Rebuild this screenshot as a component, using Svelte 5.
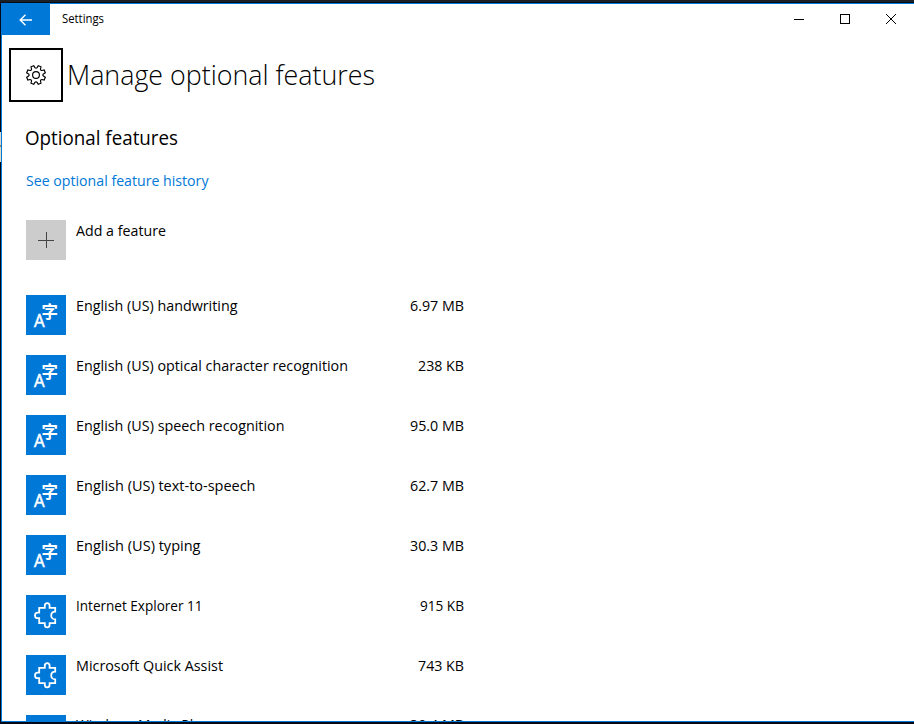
<script>
  const features = [
    { name: 'English (US) handwriting', size: '6.97 MB', kind: 'lang', w: 161.5, sw: 54 },
    { name: 'English (US) optical character recognition', size: '238 KB', kind: 'lang', w: 272, sw: 46 },
    { name: 'English (US) speech recognition', size: '95.0 MB', kind: 'lang', w: 208.5, sw: 54 },
    { name: 'English (US) text-to-speech', size: '62.7 MB', kind: 'lang', w: 179.5, sw: 54 },
    { name: 'English (US) typing', size: '30.3 MB', kind: 'lang', w: 124.5, sw: 54 },
    { name: 'Internet Explorer 11', size: '915 KB', kind: 'puzzle', w: 126.5, sw: 44 },
    { name: 'Microsoft Quick Assist', size: '743 KB', kind: 'puzzle', w: 147, sw: 46 },
    { name: 'Windows Media Player', size: '39.4 MB', kind: 'puzzle', w: 145, sw: 54, y: 15 }
  ];

  // Eight-toothed gear outline centred on the origin
  const pt = (r, deg) => {
    const a = (deg * Math.PI) / 180;
    return `${(r * Math.cos(a)).toFixed(2)} ${(r * Math.sin(a)).toFixed(2)}`;
  };
  let gear = '';
  for (let i = 0; i < 8; i++) {
    const c = i * 45 + 22.5;
    gear += `${i ? 'L' : 'M'}${pt(9.6, c - 9)} L${pt(9.6, c + 9)} L${pt(7.5, c + 14)} Q${pt(6.3, c + 22.5)} ${pt(7.5, c + 31)} `;
  }
  gear += 'Z';
</script>

{#snippet label(text, width, size, y = 17)}
  <svg class="label" width={width} height="24" role="img" aria-label={text}>
    <text x="0" y={y} font-size={size} textLength={width} lengthAdjust="spacingAndGlyphs">{text}</text>
  </svg>
{/snippet}

<div class="desktop">
  <div class="window">
    <header class="titlebar">
      <button class="back" aria-label="Back">
        <svg width="14" height="12" viewBox="0 0 14 12"><path d="M13 6H1.5M6.5 .8L1.2 6l5.3 5.2" /></svg>
      </button>
      <div class="title">{@render label('Settings', 42, 12)}</div>
      <div class="controls">
        <svg width="46" height="31" shape-rendering="crispEdges"><path d="M18 16.5h10" /></svg>
        <svg width="46" height="31" shape-rendering="crispEdges"><rect x="18.5" y="11.5" width="9" height="9" /></svg>
        <svg width="46" height="31"><path d="M18 11l10 10M28 11l-10 10" /></svg>
      </div>
    </header>

    <div class="heading">
      <button class="home" aria-label="Home">
        <svg width="22" height="22" viewBox="-11 -11 22 22"><path d={gear} /><circle r="3.4" /></svg>
      </button>
      <h1>
        <svg class="label" width="308" height="40"><text x="0" y="29" font-size="28" textLength="308" lengthAdjust="spacingAndGlyphs">Manage optional features</text></svg>
      </h1>
    </div>

    <main>
      <h2>{@render label('Optional features', 153, 20)}</h2>
      <a href="#history">{@render label('See optional feature history', 182.5, 15)}</a>

      <div class="row add">
        <div class="tile grey">
          <svg width="40" height="40" shape-rendering="crispEdges"><path d="M12 20h16M20 12v16" /></svg>
        </div>
        <div class="name">{@render label('Add a feature', 90, 15, 16)}</div>
      </div>

      <div class="list">
        {#each features as f}
          <div class="row">
            <div class="tile">
              {#if f.kind === 'lang'}
                <svg width="40" height="40">
                  <text x="15.4" y="23" class="han">字</text>
                  <text x="8" y="32" class="latin" textLength="10.6" lengthAdjust="spacingAndGlyphs">A</text>
                </svg>
              {:else}
                <svg width="40" height="40">
                  <path class="puzzle" d="M13.2 12.8H18.8V10.8A2.4 2.6 0 0 1 23.6 10.8V12.8H29.2V16.6C26.8 16.6 25.2 18.2 25.2 20.4S26.8 24.4 29.2 24.4V28.2H23.6V29.8A2.4 2.6 0 0 1 18.8 29.8V28.2H13.2V23.2H11.6A2.6 2.8 0 0 1 11.6 17.6H13.2Z" />
                </svg>
              {/if}
            </div>
            <div class="name">{@render label(f.name, f.w, 15, f.y ?? 16)}</div>
            <div class="size">{@render label(f.size, f.sw, 15, f.y ?? 16)}</div>
          </div>
        {/each}
      </div>
    </main>
  </div>
</div>

<style>
  .desktop {
    box-sizing: border-box;
    width: 914px;
    height: 724px;
    padding: 3px 0 2px 1px;
    overflow: hidden;
    background:
      linear-gradient(#d8d8d8 0 13px, #8a8468 13px 15px, #e0dccc 15px 30px) 0 132px / 1px 30px no-repeat,
      linear-gradient(#1a2026 0 2px, #050c1a 2px) 0 0 / 100% 3px no-repeat,
      #020a18;
    font-family: 'Open Sans', 'Noto Sans', sans-serif;
  }
  .window {
    box-sizing: border-box;
    height: 719px;
    border: 1px solid #0078d7;
    border-right: 0;
    background: #fff;
    overflow: hidden;
  }
  svg { display: block; fill: none; }
  .label { overflow: visible; fill: #000; }
  button { border: 0; padding: 0; background: none; display: flex; align-items: center; justify-content: center; }
  .titlebar { display: flex; height: 31px; }
  .back { width: 48px; height: 31px; background: #0078d7; }
  .back svg { stroke: #fff; stroke-width: 1.4; }
  .title { flex: 1; padding: 2px 0 0 12px; }
  .controls { display: flex; margin-top: -1px; }
  .controls svg { stroke: #000; stroke-width: 1; }
  .heading { display: flex; padding: 13px 0 0 7px; height: 54px; }
  .home { box-sizing: border-box; width: 54px; height: 54px; border: 2px solid #000; }
  .home svg { stroke: #000; stroke-width: 1.15; }
  h1 { margin: 8px 0 0 3.5px; font-weight: 300; }
  h2 { margin: 0 0 0 -1px; padding-top: 26px; height: 24px; font-weight: 400; }
  main { padding-left: 24px; }
  a { display: block; margin-top: 17px; height: 24px; }
  a :global(.label) { fill: #0078d7; }
  .row { display: flex; height: 60px; }
  .add { margin-top: 27px; height: 75px; }
  .tile { width: 40px; height: 40px; background: #0078d7; }
  .grey { background: #ccc; }
  .grey svg { stroke: #444; stroke-width: 1; }
  .name { width: 274px; padding: 0 0 0 10px; }
  .size { display: flex; justify-content: flex-end; width: 114px; }
  .han { font: 700 16.5px 'Noto Sans CJK SC', sans-serif; fill: #fff; }
  .latin { font-size: 18px; fill: #fff; stroke: #fff; stroke-width: .5; }
  .puzzle { stroke: #fff; stroke-width: 1.8; stroke-linejoin: miter; }
</style>
